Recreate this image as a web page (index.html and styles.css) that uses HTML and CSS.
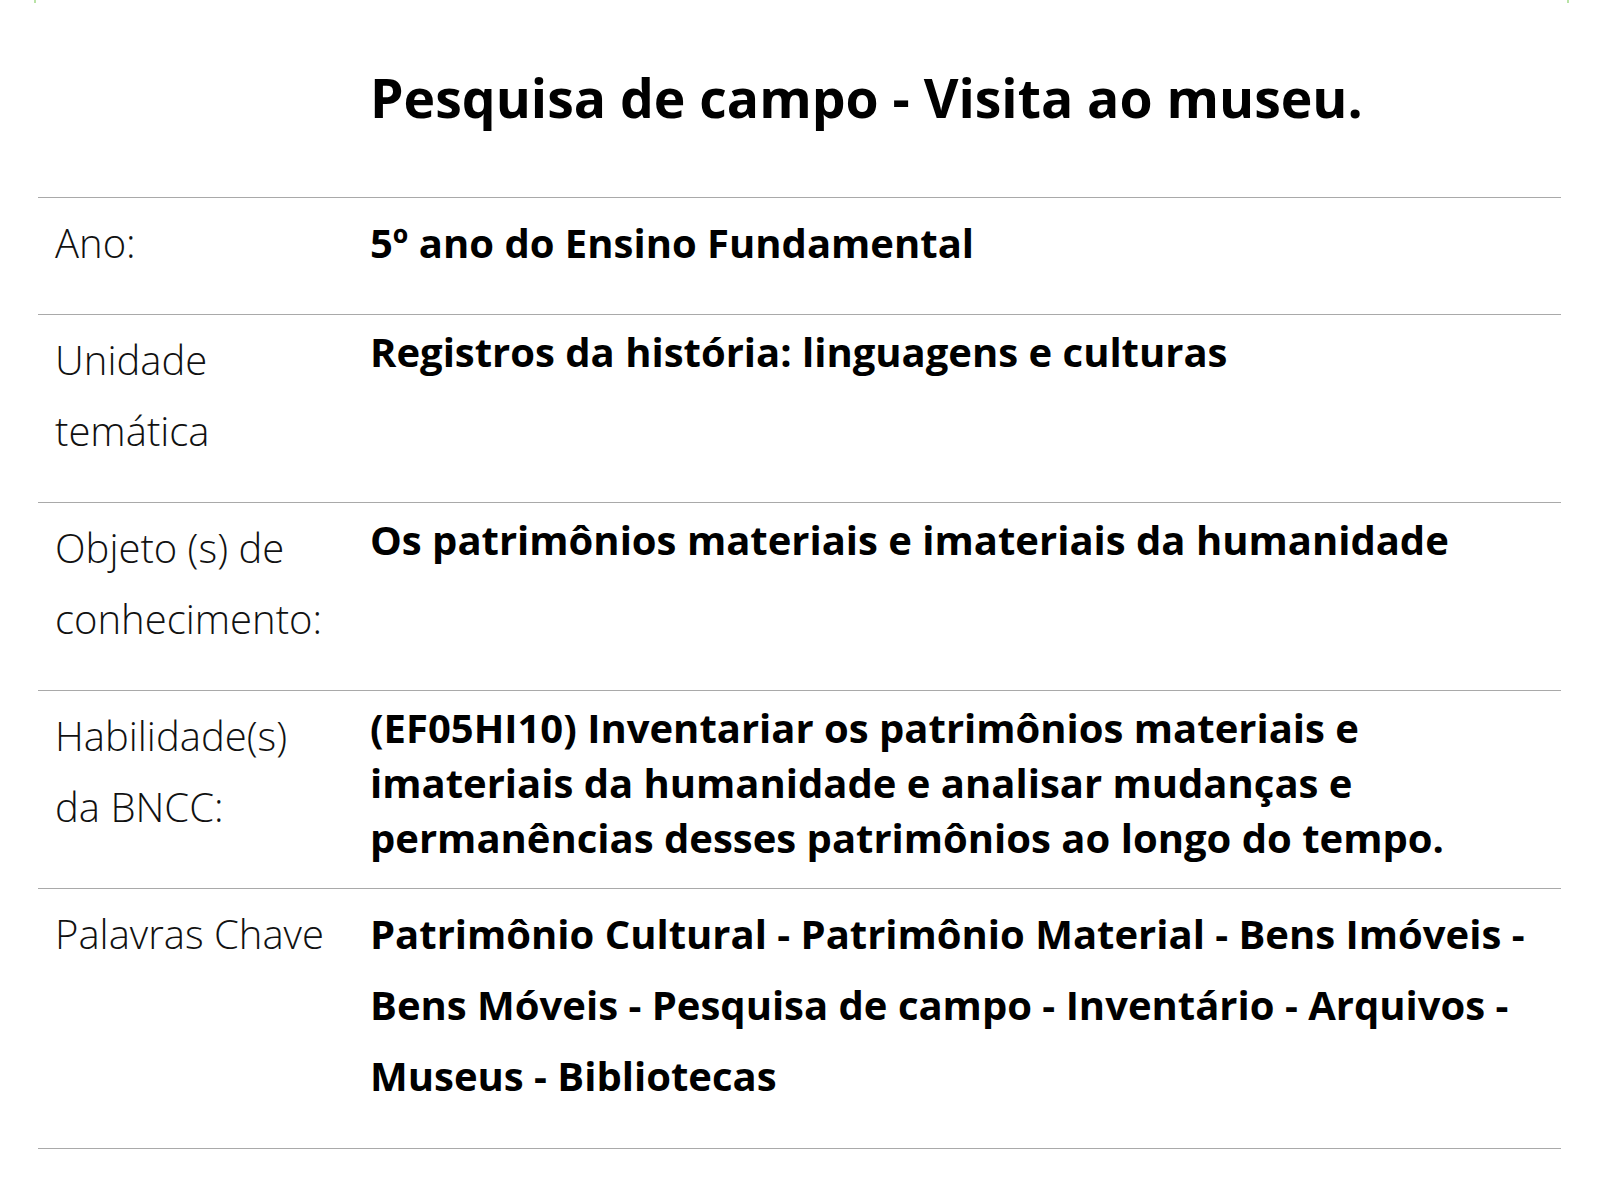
FILE: index.html
```html
<!DOCTYPE html>
<html lang="pt-BR">
<head>
<meta charset="utf-8">
<title>Pesquisa de campo - Visita ao museu.</title>
<link rel="stylesheet" href="styles.css">
</head>
<body>
<div class="frame-mark frame-mark--left"></div>
<div class="frame-mark frame-mark--right"></div>
<main class="sheet">
  <header class="sheet-head">
    <h1 class="sheet-title">Pesquisa de campo - Visita ao museu.</h1>
  </header>
  <section class="row">
    <div class="label"><p>Ano:</p></div>
    <div class="value value--tall"><p>5º ano do Ensino Fundamental</p></div>
  </section>
  <section class="row">
    <div class="label"><p>Unidade temática</p></div>
    <div class="value"><p>Registros da história: linguagens e culturas</p></div>
  </section>
  <section class="row">
    <div class="label"><p>Objeto (s) de conhecimento:</p></div>
    <div class="value"><p>Os patrimônios materiais e imateriais da humanidade</p></div>
  </section>
  <section class="row">
    <div class="label"><p>Habilidade(s) da BNCC:</p></div>
    <div class="value value--snug"><p>(EF05HI10) Inventariar os patrimônios materiais e imateriais da humanidade e analisar mudanças e permanências desses patrimônios ao longo do tempo.</p></div>
  </section>
  <section class="row row--last">
    <div class="label"><p>Palavras Chave</p></div>
    <div class="value value--tall value--loose"><p>Patrimônio Cultural - Patrimônio Material - Bens Imóveis - Bens Móveis - Pesquisa de campo - Inventário - Arquivos - Museus - Bibliotecas</p></div>
  </section>
</main>
</body>
</html>
```

FILE: styles.css
```css
html, body {
  margin: 0;
  padding: 0;
  background: #ffffff;
}

body {
  font-family: "Open Sans", "Noto Sans", sans-serif;
  color: #000;
  position: relative;
  min-height: 1200px;
}

.frame-mark {
  position: absolute;
  top: 0;
  width: 2px;
  height: 3px;
  background: #b9e3a6;
}
.frame-mark--left { left: 34px; }
.frame-mark--right { left: 1567px; }

.sheet {
  margin: 0 39px 0 38px;
  padding-top: 63px;
}

.sheet-head {
  padding-left: 332px;
  padding-bottom: 64px;
}

.sheet-title {
  margin: 0;
  font-size: 53.5px;
  line-height: 70px;
  font-weight: 700;
}

.row {
  display: grid;
  grid-template-columns: 332px 1fr;
  border-top: 1px solid #a9a9a9;
  padding-top: 9px;
}

.row--last {
  border-bottom: 1px solid #a9a9a9;
}

.label {
  padding-left: 17px;
  padding-right: 40px;
}

.label p {
  margin: 0 0 36px;
  font-size: 40px;
  font-weight: 300;
  line-height: 71px;
  color: #111;
}

.value {
  padding-right: 16px;
}

.value p {
  margin: 0 0 23px;
  font-size: 40px;
  font-weight: 700;
  line-height: 55px;
}

.value--tall p {
  line-height: 71px;
}

.value--loose p {
  margin-bottom: 37px;
}
```
